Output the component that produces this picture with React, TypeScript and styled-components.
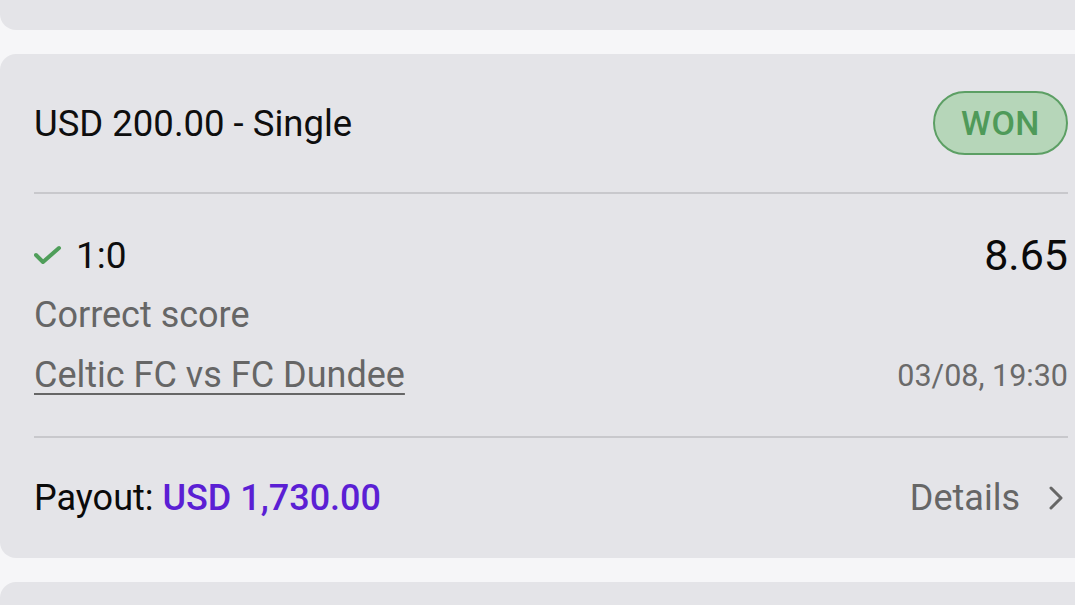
import React from 'react'
import styled, { createGlobalStyle } from 'styled-components'

const GlobalStyle = createGlobalStyle`
  html, body {
    margin: 0;
    padding: 0;
    background: #f6f6f8;
    overflow: hidden;
    font-family: Roboto, "Noto Sans", sans-serif;
  }
`

const Page = styled.div`
  width: 1095px;
  display: flex;
  flex-direction: column;
  gap: 24px;
`

const Card = styled.div<{ $stub?: 'top' | 'bottom' }>`
  background: #e4e4e8;
  border-radius: ${p =>
    p.$stub === 'top' ? '0 0 16px 16px' : p.$stub === 'bottom' ? '16px 16px 0 0' : '16px'};
  height: ${p => (p.$stub === 'top' ? '30px' : p.$stub === 'bottom' ? '24px' : 'auto')};
  padding: ${p => (p.$stub ? '0' : '0 27px 0 34px')};
`

const Header = styled.div`
  display: flex;
  align-items: center;
  justify-content: space-between;
  padding: 37px 0;
  border-bottom: 2px solid #c8c8cc;
`

const Title = styled.div`
  font-size: 36.5px;
  color: #0e0e0e;
`

const Badge = styled.div`
  box-sizing: border-box;
  width: 135px;
  height: 64px;
  border-radius: 32px;
  border: 2.5px solid #5c9f64;
  background: #b6d6b9;
  color: #4f9a59;
  font-size: 34px;
  font-weight: 500;
  display: flex;
  align-items: center;
  justify-content: center;
  letter-spacing: 0.5px;
`

const Selection = styled.div`
  display: grid;
  grid-template-columns: 1fr auto;
  grid-auto-rows: 60px;
  align-items: center;
  padding: 31px 0;
  border-bottom: 2px solid #c8c8cc;
`

const Pick = styled.div`
  display: flex;
  align-items: center;
  gap: 14px;
  font-size: 37px;
  color: #0e0e0e;
`

const Odds = styled.div`
  font-size: 43px;
  color: #0a0a0a;
  text-align: right;
`

const Market = styled.div`
  font-size: 36px;
  color: #666;
`

const EventLink = styled.a`
  font-size: 36px;
  color: #666;
  text-decoration: underline;
  text-decoration-thickness: 2px;
  text-underline-offset: 6px;
`

const Time = styled.div`
  font-size: 30.5px;
  color: #6a6a6a;
  text-align: right;
`

const Footer = styled.div`
  display: flex;
  align-items: center;
  justify-content: space-between;
  height: 60px;
  padding: 30px 0;
`

const Payout = styled.div`
  font-size: 36px;
  color: #0a0a0a;
`

const Amount = styled.span`
  color: #5b1fd4;
  font-weight: 500;
`

const DetailsLink = styled.div`
  display: flex;
  align-items: center;
  gap: 29px;
  padding-right: 5px;
  font-size: 36px;
  color: #666;
`

const App = () => (
  <>
    <GlobalStyle />
    <Page>
      <Card $stub="top" />
      <Card>
        <Header>
          <Title>USD 200.00 - Single</Title>
          <Badge>WON</Badge>
        </Header>
        <Selection>
          <Pick>
            <svg width="28" height="20" viewBox="0 0 28 20">
              <polyline points="2,10 9,17 25,3" fill="none" stroke="#4f9e5a" strokeWidth="4" strokeLinecap="round" strokeLinejoin="round" />
            </svg>
            1:0
          </Pick>
          <Odds>8.65</Odds>
          <Market>Correct score</Market>
          <div />
          <div>
            <EventLink>Celtic FC vs FC Dundee</EventLink>
          </div>
          <Time>03/08, 19:30</Time>
        </Selection>
        <Footer>
          <Payout>
            Payout: <Amount>USD 1,730.00</Amount>
          </Payout>
          <DetailsLink>
            Details
            <svg width="14" height="24" viewBox="0 0 14 24">
              <polyline points="2,2 12,12 2,22" fill="none" stroke="#666" strokeWidth="3" strokeLinecap="round" strokeLinejoin="round" />
            </svg>
          </DetailsLink>
        </Footer>
      </Card>
      <Card $stub="bottom" />
    </Page>
  </>
)

export default App
